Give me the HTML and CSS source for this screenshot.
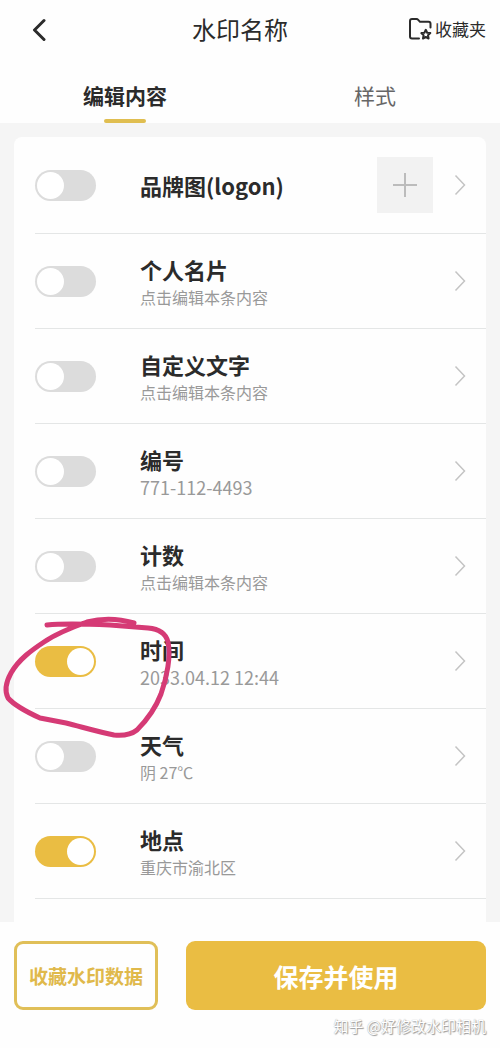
FILE: index.html
```html
<!DOCTYPE html>
<html lang="zh-CN">
<head>
<meta charset="utf-8">
<meta name="viewport" content="width=device-width, initial-scale=1">
<title>水印名称</title>
<link rel="stylesheet" href="styles.css">
</head>
<body>
<svg class="defs" aria-hidden="true">
  <symbol id="chevron" viewBox="0 0 12 22"><path d="M1.500 1.500L10.500 11L1.500 20.500"/></symbol>
</svg>
<header class="topbar">
  <button class="back" type="button" aria-label="返回">
    <svg class="back-icon" viewBox="0 0 14 24"><path d="M12 2.500L2.500 12L12 21.500"/></svg>
  </button>
  <h1 class="heading">水印名称</h1>
  <button class="favorites" type="button">
    <svg class="folder-icon" viewBox="0 0 24 24">
      <path d="M11 21.500H4Q2 21.500 2 19.500V4Q2 2 4 2H8.500Q9.500 2 10.200 2.800L12 4.800H20.500Q22.500 4.800 22.500 6.800V10.500"/>
      <path class="star" d="M17.800 12.800L19.200 15.700L22.300 16.100L20 18.300L20.600 21.500L17.800 20L15 21.500L15.600 18.300L13.300 16.100L16.400 15.700Z"/>
    </svg>
    <span>收藏夹</span>
  </button>
</header>
<nav class="tabs">
  <button class="tab tab-active" type="button">编辑内容</button>
  <button class="tab" type="button">样式</button>
</nav>
<main class="content">
  <ul class="card">
    <li class="row">
      <input class="toggle" type="checkbox" id="brand">
      <div class="text"><label class="name" for="brand">品牌图(logon)</label></div>
      <button class="add" type="button" aria-label="添加图片"><svg class="plus" viewBox="0 0 24 24"><path d="M12 0V24M0 12H24"/></svg></button>
      <button class="more" type="button" aria-label="编辑品牌图"><svg class="chevron"><use href="#chevron"/></svg></button>
    </li>
    <li class="row">
      <input class="toggle" type="checkbox" id="person">
      <div class="text two-line"><label class="name" for="person">个人名片</label><span class="detail">点击编辑本条内容</span></div>
      <button class="more" type="button" aria-label="编辑个人名片"><svg class="chevron"><use href="#chevron"/></svg></button>
    </li>
    <li class="row">
      <input class="toggle" type="checkbox" id="custom">
      <div class="text two-line"><label class="name" for="custom">自定义文字</label><span class="detail">点击编辑本条内容</span></div>
      <button class="more" type="button" aria-label="编辑自定义文字"><svg class="chevron"><use href="#chevron"/></svg></button>
    </li>
    <li class="row">
      <input class="toggle" type="checkbox" id="number">
      <div class="text two-line"><label class="name" for="number">编号</label><span class="detail digits">771-112-4493</span></div>
      <button class="more" type="button" aria-label="编辑编号"><svg class="chevron"><use href="#chevron"/></svg></button>
    </li>
    <li class="row">
      <input class="toggle" type="checkbox" id="count">
      <div class="text two-line"><label class="name" for="count">计数</label><span class="detail">点击编辑本条内容</span></div>
      <button class="more" type="button" aria-label="编辑计数"><svg class="chevron"><use href="#chevron"/></svg></button>
    </li>
    <li class="row">
      <input class="toggle" type="checkbox" id="time" checked>
      <div class="text two-line"><label class="name" for="time">时间</label><span class="detail digits">2033.04.12 12:44</span></div>
      <button class="more" type="button" aria-label="编辑时间"><svg class="chevron"><use href="#chevron"/></svg></button>
      <svg class="scribble" viewBox="0 610 180 130" aria-hidden="true">
        <path d="M47 625C65 623 89 624 110 625L148 628C160 629 166 634 168 642C171 656 167 677 161 694C156 707 147 720 137 730C132 734 125 736 114 735C99 732 82 727 66 723L40 718C29 713 15 706 8 698C4 690 6 682 11 673C19 659 32 650 44 642C57 633 73 627 87 622C102 618 117 618 134 623"/>
      </svg>
    </li>
    <li class="row">
      <input class="toggle" type="checkbox" id="weather">
      <div class="text two-line"><label class="name" for="weather">天气</label><span class="detail">阴 27℃</span></div>
      <button class="more" type="button" aria-label="编辑天气"><svg class="chevron"><use href="#chevron"/></svg></button>
    </li>
    <li class="row">
      <input class="toggle" type="checkbox" id="place" checked>
      <div class="text two-line"><label class="name" for="place">地点</label><span class="detail">重庆市渝北区</span></div>
      <button class="more" type="button" aria-label="编辑地点"><svg class="chevron"><use href="#chevron"/></svg></button>
    </li>
  </ul>
</main>
<footer class="footer">
  <div class="actions">
    <button class="action outline" type="button">收藏水印数据</button>
    <button class="action primary" type="button">保存并使用</button>
  </div>
  <p class="credit">知乎 @好修改水印相机</p>
</footer>
</body>
</html>
```
FILE: styles.css
```css
* {
  box-sizing: border-box;
}

body {
  margin: 0;
  background: #fefefe;
  color: #2b2b2b;
  font-family: "Noto Sans CJK SC", sans-serif;
}

button {
  padding: 0;
  border: 0;
  background: none;
  color: inherit;
  font: inherit;
}

svg {
  display: block;
  fill: none;
}

.defs {
  display: none;
}

.topbar {
  display: grid;
  grid-template-columns: 1fr auto 1fr;
  align-items: center;
  height: 60px;
  padding: 0 14px;
}

.back {
  justify-self: start;
  margin-left: 18px;
}

.back-icon {
  width: 14px;
  height: 24px;
  stroke: #2b2b2b;
  stroke-width: 3;
  stroke-linecap: round;
  stroke-linejoin: round;
}

.heading {
  margin: 0 20px 2px 0;
  font-size: 24px;
  font-weight: 400;
  line-height: 32px;
}

.favorites {
  display: flex;
  justify-self: end;
  align-items: center;
  gap: 3px;
  padding-bottom: 2px;
  font-size: 17px;
  line-height: 24px;
  white-space: nowrap;
}

.folder-icon {
  width: 24px;
  height: 24px;
  stroke: #2b2b2b;
  stroke-width: 2;
  stroke-linecap: round;
}

.star {
  stroke-linejoin: round;
}

.tabs {
  display: flex;
  height: 63px;
}

.tab {
  display: flex;
  flex: 1;
  flex-direction: column;
  align-items: center;
  justify-content: flex-end;
  gap: 9px;
  color: #666;
  font-size: 21px;
  line-height: 30px;
}

.tab::after {
  width: 42px;
  height: 4px;
  border-radius: 2px;
  content: "";
}

.tab-active {
  color: #2b2b2b;
  font-weight: 700;
}

.tab-active::after {
  background: #e0be50;
}

.content {
  padding: 14px 14px 0;
  background: #f5f5f5;
}

.card {
  margin: 0;
  padding: 0 0 23px 21px;
  border-radius: 8px 8px 0 0;
  background: #fefefe;
  list-style: none;
}

.row {
  position: relative;
  display: flex;
  align-items: center;
  height: 95px;
  padding-right: 20px;
  border-bottom: 1px solid #e4e6e6;
}

.row:first-child {
  height: 97px;
}

.toggle {
  flex: none;
  width: 61px;
  height: 31px;
  margin: 0;
  padding: 2px;
  border-radius: 16px;
  background: #dcdcdc;
  appearance: none;
}

.toggle::before {
  display: block;
  width: 27px;
  height: 27px;
  border-radius: 50%;
  background: #fff;
  content: "";
}

.toggle:checked {
  background: #eabd43;
}

.toggle:checked::before {
  margin-left: auto;
}

.text {
  display: flex;
  flex: 1;
  flex-direction: column;
  margin-left: 44px;
}

.two-line {
  gap: 2px;
  padding-top: 2px;
}

.name {
  font-size: 22px;
  font-weight: 700;
  line-height: 28px;
}

.detail {
  color: #999;
  font-size: 16px;
  line-height: 24px;
}

.digits {
  font-size: 18px;
}

.add {
  display: grid;
  width: 56px;
  height: 56px;
  margin-right: 21px;
  background: #f2f2f2;
  place-items: center;
}

.plus {
  width: 24px;
  height: 24px;
  stroke: #bcbcbc;
  stroke-width: 2;
}

.chevron {
  width: 12px;
  height: 22px;
  stroke: #c4c4c4;
  stroke-width: 1.5;
}

.scribble {
  position: absolute;
  top: -4px;
  left: -35px;
  width: 180px;
  height: 130px;
  stroke: #d53a75;
  stroke-width: 5;
  stroke-linecap: round;
  stroke-linejoin: round;
  pointer-events: none;
  z-index: 1;
}

.footer {
  padding: 19px 14px 8px;
}

.actions {
  display: grid;
  grid-template-columns: 12fr 25fr;
  gap: 28px;
}

.action {
  height: 69px;
  border-radius: 9px;
  font-weight: 700;
  white-space: nowrap;
}

.outline {
  border: 3px solid #e0bf58;
  color: #e0b94b;
  font-size: 19px;
}

.primary {
  background: #eabd43;
  color: #fff;
  font-size: 25px;
}

.credit {
  margin: 4px 0 0;
  color: #fff;
  font-size: 15px;
  line-height: 24px;
  text-align: right;
  text-shadow: 0 0 1px #999, 1px 1px 1px #999;
}
```
